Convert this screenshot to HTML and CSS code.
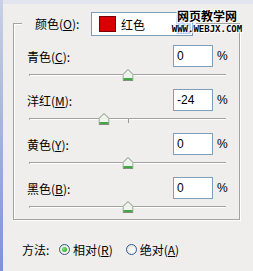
FILE: index.html
```html
<!DOCTYPE html>
<html lang="zh-CN">
<head>
    <meta charset="UTF-8">
    <title>可选颜色</title>
    <link rel="stylesheet" href="styles.css">
</head>
<body>
    <div class="dialog">
        <div class="group">
            <div class="group-head">
                <span class="head-label">颜色(<u>O</u>):</span>
                <div class="select">
                    <span class="swatch"></span>
                    <span class="select-text">红色</span>
                    <span class="select-btn"></span>
                </div>
            </div>

            <div class="channels">
                <div class="channel">
                    <div class="channel-row">
                        <span class="channel-label">青色(<u>C</u>):</span>
                        <span class="field">0</span>
                        <span class="unit">%</span>
                    </div>
                    <div class="slider">
                        <span class="track"></span>
                        <span class="tick"></span>
                        <span class="thumb" style="left:50%"><svg width="11" height="12" viewBox="0 0 11 12"><path d="M5.5 0.5 L10.5 5.5 V11.5 H0.5 V5.5 Z" fill="#eef4ec" stroke="#7f907f"/><path d="M1 10 H10" stroke="#49a449" stroke-width="2"/></svg></span>
                    </div>
                </div>

                <div class="channel">
                    <div class="channel-row">
                        <span class="channel-label">洋红(<u>M</u>):</span>
                        <span class="field">-24</span>
                        <span class="unit">%</span>
                    </div>
                    <div class="slider">
                        <span class="track"></span>
                        <span class="tick"></span>
                        <span class="thumb" style="left:38%"><svg width="11" height="12" viewBox="0 0 11 12"><path d="M5.5 0.5 L10.5 5.5 V11.5 H0.5 V5.5 Z" fill="#eef4ec" stroke="#7f907f"/><path d="M1 10 H10" stroke="#49a449" stroke-width="2"/></svg></span>
                    </div>
                </div>

                <div class="channel">
                    <div class="channel-row">
                        <span class="channel-label">黄色(<u>Y</u>):</span>
                        <span class="field">0</span>
                        <span class="unit">%</span>
                    </div>
                    <div class="slider">
                        <span class="track"></span>
                        <span class="tick"></span>
                        <span class="thumb" style="left:50%"><svg width="11" height="12" viewBox="0 0 11 12"><path d="M5.5 0.5 L10.5 5.5 V11.5 H0.5 V5.5 Z" fill="#eef4ec" stroke="#7f907f"/><path d="M1 10 H10" stroke="#49a449" stroke-width="2"/></svg></span>
                    </div>
                </div>

                <div class="channel">
                    <div class="channel-row">
                        <span class="channel-label">黑色(<u>B</u>):</span>
                        <span class="field">0</span>
                        <span class="unit">%</span>
                    </div>
                    <div class="slider">
                        <span class="track"></span>
                        <span class="tick"></span>
                        <span class="thumb" style="left:50%"><svg width="11" height="12" viewBox="0 0 11 12"><path d="M5.5 0.5 L10.5 5.5 V11.5 H0.5 V5.5 Z" fill="#eef4ec" stroke="#7f907f"/><path d="M1 10 H10" stroke="#49a449" stroke-width="2"/></svg></span>
                    </div>
                </div>
            </div>
        </div>

        <div class="method">
            <span class="method-label">方法:</span>
            <span class="option"><span class="radio checked"></span>相对(<u>R</u>)</span>
            <span class="option"><span class="radio"></span>绝对(<u>A</u>)</span>
        </div>

        <!-- водяной знак поверх диалога -->
        <div class="watermark">
            <div class="wm-title">网页教学网</div>
            <div class="wm-url">WWW.WEBJX.COM</div>
        </div>
    </div>
</body>
</html>
```

FILE: styles.css
```css
/* --- База --- */
* {
    margin: 0;
    padding: 0;
    box-sizing: border-box;
}

body {
    width: 253px;
    height: 271px;
    overflow: hidden;
    background:
        linear-gradient(#c9d0e4, #7d93d6) 0 0 / 3px 100% no-repeat,
        linear-gradient(#e2e5ee, #e2e5ee) 0 0 / 100% 4px no-repeat,
        #efeeec;
    color: #000;
    font-family: "Noto Sans CJK SC", sans-serif;
    font-size: 12px;
}

u {
    text-decoration: underline;
    text-underline-offset: 1px;
}

.dialog {
    position: relative;
    height: 271px;
    padding-top: 23px;
}

/* --- Группа --- */
.group {
    margin-left: 13px;
    width: 227px;
    height: 197px;
    padding: 0 13px;
    border: 1px solid #a3a3a0;
    box-shadow: inset 1px 1px 0 #fff, 1px 1px 0 #fff;
}

.group-head {
    display: flex;
    align-items: center;
    width: fit-content;
    height: 24px;
    margin: -12px 0 0 -5px;
    padding: 0 3px 0 13px;
    background: #efeeec;
}

.head-label {
    width: 56px;
    line-height: 16px;
}

.select {
    display: flex;
    align-items: center;
    width: 102px;
    height: 24px;
    padding-left: 7px;
    border: 1px solid #7f9db9;
    background: #fff;
}

.swatch {
    width: 17px;
    height: 16px;
    background: #d80000;
    border: 1px solid #7a0000;
}

.select-text {
    margin-left: 5px;
}

.select-btn {
    margin-left: auto;
    margin-right: 1px;
    width: 15px;
    height: 20px;
    border-radius: 2px;
    background: linear-gradient(#dbe5fb, #b5c8f2);
}

/* --- Каналы --- */
.channels {
    display: flex;
    flex-direction: column;
    gap: 2px;
    margin-top: 9px;
}

.channel-row {
    display: flex;
    align-items: center;
    height: 22px;
}

.channel-label {
    flex: 1;
}

.field {
    width: 40px;
    height: 22px;
    padding-left: 3px;
    border: 1px solid #7f9db9;
    background: #fff;
    font-family: "Liberation Sans", sans-serif;
    font-size: 12px;
    line-height: 20px;
}

.unit {
    width: 9px;
    margin-left: 4px;
    font-family: "Liberation Sans", sans-serif;
    font-size: 12px;
}

/* --- Ползунки --- */
.slider {
    position: relative;
    width: 200px;
    height: 20px;
    margin-left: 1px;
    padding: 7px 0 0 1px;
}

.track {
    display: block;
    width: 197px;
    height: 2px;
    border-top: 1px solid #a2a2a2;
    border-bottom: 1px solid #fff;
    border-left: 1px solid #777;
}

.tick {
    position: absolute;
    left: 50%;
    top: 8px;
    width: 1px;
    height: 4px;
    background: #9a9a9a;
}

.thumb {
    position: absolute;
    top: 2px;
    width: 11px;
    height: 12px;
    transform: translateX(-50%);
}

.thumb svg {
    display: block;
}

/* --- Метод --- */
.method {
    display: flex;
    align-items: center;
    height: 16px;
    margin: 21px 0 0 22px;
}

.method-label {
    width: 37px;
}

.option {
    display: flex;
    align-items: center;
    margin-right: 13px;
}

.radio {
    position: relative;
    width: 11px;
    height: 11px;
    margin-right: 3px;
    border: 1px solid #2c5b8c;
    border-radius: 50%;
    background: radial-gradient(circle at 60% 60%, #fff, #dcdcd4);
}

.radio.checked::after {
    content: "";
    position: absolute;
    left: 2px;
    top: 2px;
    width: 5px;
    height: 5px;
    border-radius: 50%;
    background: radial-gradient(circle at 35% 35%, #7ee07e, #1f9a1f);
}

/* --- Водяной знак --- */
.watermark {
    position: absolute;
    left: 171px;
    top: 8px;
    text-align: center;
    width: 72px;
}

.wm-title {
    font-size: 12px;
    font-weight: bold;
    line-height: 15px;
    text-shadow: 1px 1px 0 #fff, -1px -1px 0 #fff, 1px -1px 0 #fff, -1px 1px 0 #fff;
}

.wm-url {
    margin-top: 2px;
    font-family: "DejaVu Sans Mono", monospace;
    font-size: 9px;
    font-weight: bold;
    line-height: 9px;
    text-shadow: 1px 1px 0 #fff, -1px -1px 0 #fff;
}
```
